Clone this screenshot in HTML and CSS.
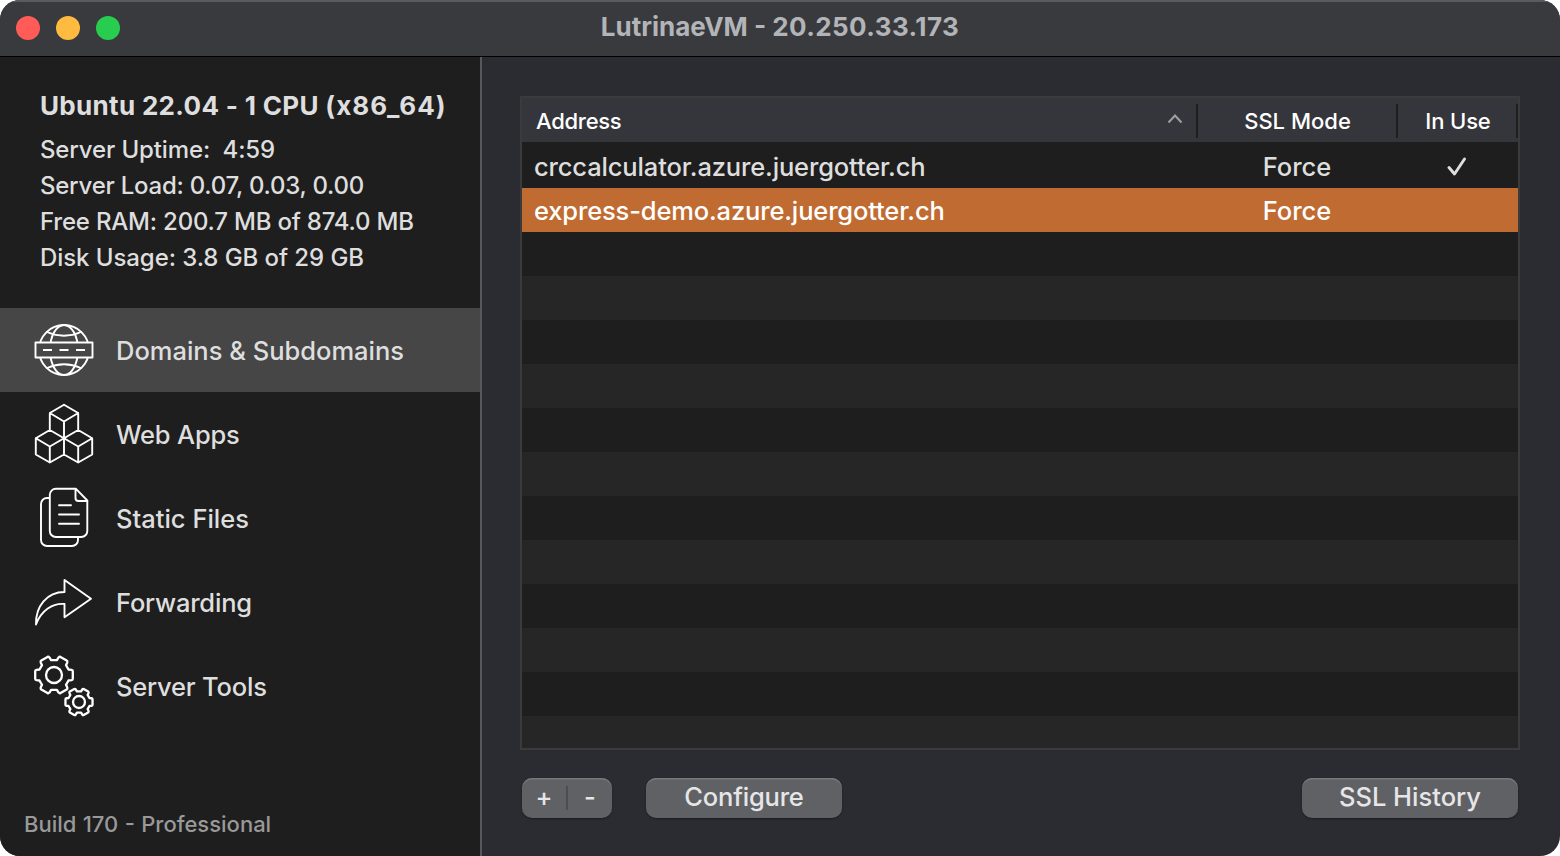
FILE: index.html
```html
<!DOCTYPE html>
<html lang="en">
<head>
<meta charset="utf-8">
<title>LutrinaeVM - 20.250.33.173</title>
<link rel="stylesheet" href="styles.css">
</head>
<body>
<div class="window">
  <header class="titlebar">
    <div class="lights"><i class="light close"></i><i class="light minimize"></i><i class="light zoom"></i></div>
    <h1 class="title">LutrinaeVM - <span class="ip">20.250.33.173</span></h1>
  </header>
  <div class="content">
    <aside class="sidebar">
      <section class="stats">
        <h2 class="system">Ubuntu 22.04 - 1 CPU <span class="arch">(x86_64)</span></h2>
        <p class="stat uptime">Server Uptime:&nbsp; 4:59</p>
        <p class="stat load">Server Load: 0.07, 0.03, 0.00</p>
        <p class="stat ram">Free RAM: 200.7 MB of 874.0 MB</p>
        <p class="stat disk">Disk Usage: 3.8 GB of 29 GB</p>
      </section>
      <nav class="nav">
        <a class="item selected">
          <svg class="icon" viewBox="0 0 64 64"><circle cx="32" cy="32" r="25"/><ellipse cx="32" cy="32" rx="14" ry="25"/><path d="M15 14Q32 21.500 49 14M15 50Q32 42.500 49 50"/><path class="plate" d="M3.500 24.500h57v15H3.500z"/><path class="dashes" d="M11 32h9M27.500 32h9M44 32h9"/></svg>
          <span class="label">Domains &amp; Subdomains</span></a>
        <a class="item">
          <svg class="icon" viewBox="0 0 64 64"><path d="M32 2.800 46.200 11v17L32 36.200V19.500L17.800 11 32 2.800M46.200 11 32 19.500M17.800 11v17L32 36.200M17.800 28 3.800 36.200V52.500L17.800 60.500 32 52.500V36.200M3.800 36.200 17.800 44.500 32 36.200 46.200 44.500 60.200 36.200 46.200 28M17.800 44.500v16M46.200 44.500v16M60.200 36.200V52.500L46.200 60.500 32 52.500"/></svg>
          <span class="label tight">Web Apps</span></a>
        <a class="item">
          <svg class="icon" viewBox="0 0 64 64"><path d="M17.800 12H15a6 6 0 0 0-6 6v36a6 6 0 0 0 6 6h25a6 6 0 0 0 6-6v-3M23.500 2.800H44L55.300 14.500V45a6 6 0 0 1-6 6h-25.500a6 6 0 0 1-6-6V8.800a6 6 0 0 1 6-6ZM43.500 2.800V12a3 3 0 0 0 3 3h9M27 19.200h12M27 28.500h20M27 37.700h20"/></svg>
          <span class="label">Static Files</span></a>
        <a class="item">
          <svg class="icon" viewBox="0 0 64 64"><path d="M32.500 10 59 28.700 32.500 47.200V34C20 33 9 41 4 54.500 3.500 36 15 22 32.500 22Z"/></svg>
          <span class="label tight">Forwarding</span></a>
        <a class="item">
          <svg class="icon gears" viewBox="0 0 64 64"><defs><path id="gear" vector-effect="non-scaling-stroke" d="M14.500-5.500 17.500-5.200Q18.800-5 18.800-3.800V3.800Q18.800 5 17.500 5.200L14.500 5.500 12 9.800 13.300 12.600Q13.700 13.900 12.700 14.500L6.500 18.100Q5.500 18.600 4.600 17.600L2.900 14.800H-2.900L-4.600 17.600Q-5.500 18.600-6.500 18.100L-12.700 14.500Q-13.700 13.900-13.300 12.600L-12 9.800-14.500 5.500-17.500 5.200Q-18.800 5-18.800 3.800V-3.800Q-18.800-5-17.500-5.200L-14.500-5.500-12-9.800-13.300-12.600Q-13.700-13.900-12.700-14.500L-6.500-18.100Q-5.500-18.600-4.600-17.600L-2.900-14.800H2.900L4.600-17.600Q5.500-18.600 6.500-18.100L12.700-14.500Q13.700-13.900 13.300-12.600L12-9.800Z"/></defs><use href="#gear" x="22" y="21"/><circle cx="22" cy="21" r="8"/><g transform="translate(47 48) scale(.72)"><use href="#gear"/><circle r="8.300" vector-effect="non-scaling-stroke"/></g></svg>
          <span class="label tight">Server Tools</span></a>
      </nav>
      <footer class="build">Build 170 - Professional</footer>
    </aside>
    <main class="main">
      <div class="table">
        <div class="row head">
          <div class="cell address"><span>Address</span><svg class="sort" viewBox="0 0 16 10"><path d="M1.500 8.500 8 1.500l6.500 7"/></svg></div>
          <div class="cell mode">SSL Mode</div>
          <div class="cell use">In Use</div>
        </div>
        <div class="row first">
          <div class="cell address">crccalculator.azure.juergotter.ch</div>
          <div class="cell mode"><span class="force">Force</span></div>
          <div class="cell use"><svg class="check" viewBox="0 0 20 20"><path d="M2 10.500 7.500 17 17.500 2"/></svg></div>
        </div>
        <div class="row active">
          <div class="cell address">express-demo.azure.juergotter.ch</div>
          <div class="cell mode"><span class="force">Force</span></div>
          <div class="cell use"></div>
        </div>
        <div class="empty"></div>
      </div>
      <div class="actions">
        <div class="button pair"><span class="plus">+</span><i class="split"></i><span class="minus">-</span></div>
        <button class="button configure">Configure</button>
        <button class="button history">SSL History</button>
      </div>
    </main>
  </div>
</div>
</body>
</html>
```
FILE: styles.css
```css
* { box-sizing: border-box; }
body { margin: 0; background: #fff; font-family: Inter, "Liberation Sans", sans-serif; font-weight: 450; color: #dedede; }
h1, h2, p { margin: 0; white-space: nowrap; }
.window { width: 1560px; height: 856px; display: flex; flex-direction: column; border-radius: 20px; overflow: hidden; background: #2b2c31; }
.titlebar { height: 57px; flex: none; display: grid; grid-template-columns: 1fr auto 1fr; align-items: center; background: #393a3e; border-bottom: 1px solid #000; box-shadow: inset 0 2px #5a5b5f; }
.lights { display: flex; gap: 16px; padding-left: 16px; }
.light { width: 24px; height: 24px; border-radius: 50%; }
.close { background: #ff5b57; }
.minimize { background: #febb40; }
.zoom { background: #28cc4e; }
.title { font-size: 26px; line-height: 54px; padding-bottom: 2px; font-weight: 700; color: #b3b4b7; }
.ip { letter-spacing: .4px; }
.content { display: flex; flex: 1; min-height: 0; }
.sidebar { width: 482px; border-right: 2px solid #57585c; background: #1e1e1e; display: flex; flex-direction: column; }
.stats { height: 251px; padding: 31px 0 0 40px; }
.system { font-size: 26px; line-height: 36px; font-weight: 700; letter-spacing: .32px; margin-bottom: 8px; }
.arch { letter-spacing: 1.050px; }
.stat { font-size: 24px; line-height: 36px; }
.uptime { letter-spacing: -.13px; }
.load { letter-spacing: -.24px; }
.ram { letter-spacing: -.2px; }
.disk { letter-spacing: -.07px; }
.item { height: 84px; display: flex; align-items: center; gap: 20px; padding-left: 32px; font-size: 25.500px; line-height: 36px; }
.label { padding-top: 2px; white-space: nowrap; }
.tight { letter-spacing: -.2px; }
.selected { background: #464646; }
.icon { width: 64px; height: 64px; fill: none; stroke: #fff; stroke-width: 1.900; stroke-linejoin: round; stroke-linecap: round; }
.plate { fill: #464646; }
.dashes { stroke-linecap: butt; }
.gears { stroke-width: 2.300; }
.build { margin-top: auto; padding: 0 0 16px 24px; font-size: 22px; line-height: 32px; word-spacing: .5px; color: #999; }
.main { flex: 1; padding: 39px 40px 38px 38px; display: flex; flex-direction: column; }
.table { height: 654px; border: 2px solid #3b3b3b; background: #1e1e1e; display: flex; flex-direction: column; }
.row { display: flex; height: 44px; flex: none; font-size: 25.500px; letter-spacing: -.15px; }
.cell { display: flex; align-items: center; justify-content: center; white-space: nowrap; }
.address { width: 676px; justify-content: flex-start; padding-left: 12px; }
.mode { width: 200px; }
.use { width: 120px; }
.head { background: #35363b; color: #fff; font-size: 22px; font-weight: 500; letter-spacing: 0; padding: 6px 0 4px; }
.head .cell { border-right: 2px solid #1e1e1e; }
.head .address { justify-content: space-between; padding: 0 13px 0 14px; letter-spacing: -.27px; }
.head .mode { padding-left: 1px; }
.head .use { padding-left: 2px; letter-spacing: -.15px; }
.first { height: 46px; padding-top: 3px; }
.active { background: #bf6b31; color: #fff; }
.force { margin-right: 2px; letter-spacing: 0; }
.sort { width: 16px; height: 10px; margin-bottom: 4px; fill: none; stroke: #a0a0a3; stroke-width: 2; }
.check { width: 20px; height: 20px; margin-right: 2px; fill: none; stroke: #dedede; stroke-width: 2.900; stroke-linecap: round; stroke-linejoin: round; }
.empty { flex: 1; background: repeating-linear-gradient(#1e1e1e 0 44px, #262626 44px 88px); }
.actions { display: flex; margin-top: 28px; padding: 0 2px; }
.button { height: 40px; border: 0; border-radius: 10px; background: #606165; box-shadow: inset 0 1.500px #77787b, 0 1px 2px #1b1c1f; color: #e6e6e7; font: 450 25.500px/36px Inter, "Liberation Sans", sans-serif; padding: 0 0 2px; }
.pair { width: 90px; display: flex; align-items: center; padding: 0; }
.plus, .minus { width: 44px; text-align: center; padding-bottom: 2px; font-weight: 500; }
.split { width: 2px; height: 24px; background: #4c4d51; }
.configure { width: 196px; margin-left: 34px; letter-spacing: -.2px; }
.history { width: 216px; margin-left: auto; }
```
